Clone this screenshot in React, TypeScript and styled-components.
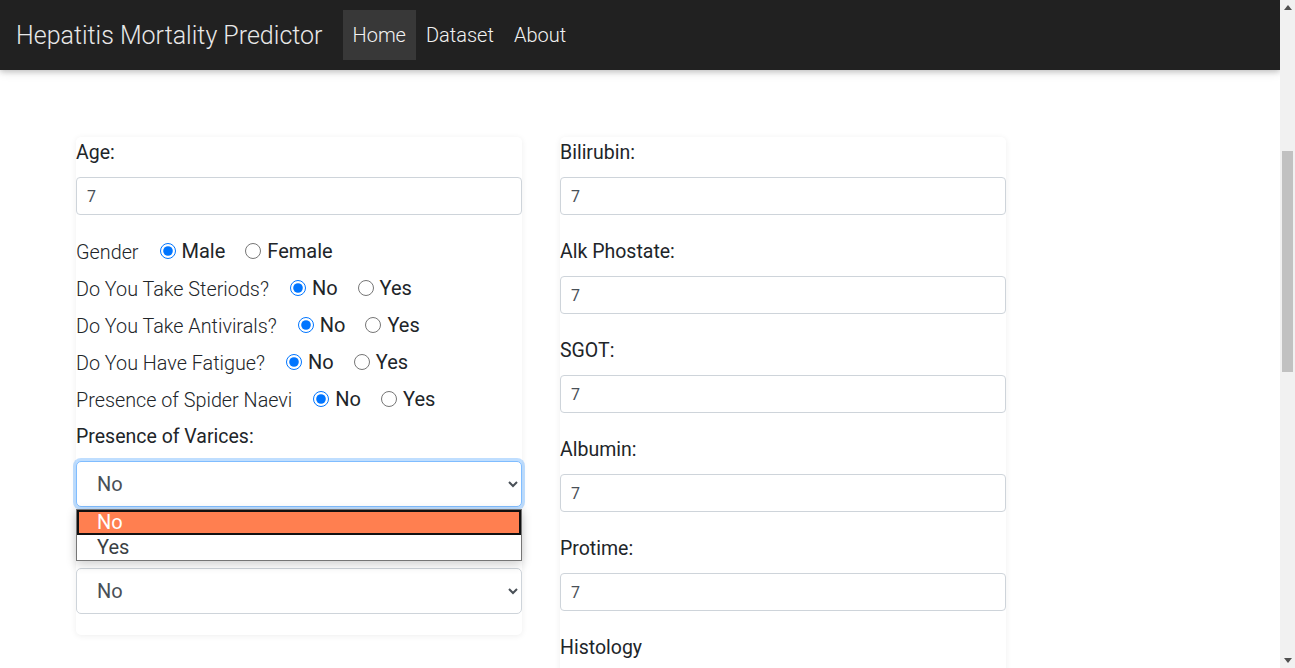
import React from "react";
import styled, { createGlobalStyle } from "styled-components";

const GlobalStyle = createGlobalStyle`
  html, body { margin: 0; padding: 0; height: 100%; overflow: hidden; background: #fff; }
  body { font-family: Roboto, "Noto Sans", "Liberation Sans", sans-serif; color: #212529; }
  * { box-sizing: border-box; }
`;

const Shell = styled.div`
  display: flex;
  width: 100%;
  height: 668px;
`;

const Main = styled.div`
  flex: 1;
  min-width: 0;
  display: flex;
  flex-direction: column;
  overflow: hidden;
`;

const Navbar = styled.nav`
  position: relative;
  z-index: 2;
  flex-shrink: 0;
  height: 70px;
  display: flex;
  align-items: center;
  padding-left: 16px;
  background: #212121;
  box-shadow: 0 2px 5px rgba(0, 0, 0, 0.16), 0 2px 10px rgba(0, 0, 0, 0.12);
`;

const Brand = styled.a`
  font-size: 25px;
  font-weight: 300;
  color: #e8e8e8;
  margin-right: 20px;
  text-decoration: none;
`;

const NavItem = styled.a<{ $active?: boolean }>`
  display: flex;
  align-items: center;
  height: 50px;
  padding: 0 10px;
  font-size: 20px;
  font-weight: 300;
  color: #f2f2f2;
  text-decoration: none;
  background: ${(p) => (p.$active ? "#383838" : "transparent")};
`;

const Content = styled.div`
  flex: 1;
  overflow: hidden;
  display: flex;
  align-items: flex-start;
  gap: 38px;
  padding: 67px 0 0 76px;
`;

const Card = styled.div`
  width: 446px;
  flex-shrink: 0;
  border-radius: 5px;
  background: #fff;
  box-shadow: 0 1px 6px rgba(0, 0, 0, 0.07);
  padding-bottom: 21px;
`;

const Field = styled.div<{ $mt?: number; $mb?: number }>`
  position: relative;
  margin-top: ${(p) => p.$mt ?? 0}px;
  margin-bottom: ${(p) => p.$mb ?? 21}px;
`;

const Label = styled.label<{ $hidden?: boolean }>`
  display: block;
  font-size: 19.5px;
  font-weight: 400;
  line-height: 30px;
  padding-top: 1px;
  height: 30px;
  color: #212529;
  margin-bottom: 10px;
  visibility: ${(p) => (p.$hidden ? "hidden" : "visible")};
`;

const Input = styled.input`
  display: block;
  width: 100%;
  height: 38px;
  padding: 0 10px;
  font-family: inherit;
  font-size: 16px;
  color: #495057;
  border: 1px solid #ced4da;
  border-radius: 4px;
  background: #fff;
  outline: none;
`;

const Select = styled.select<{ $focus?: boolean }>`
  display: block;
  width: 100%;
  height: 46px;
  padding: 0 4px 0 16px;
  font-family: inherit;
  font-size: 20px;
  color: #495057;
  background: #fff;
  border: 1px solid ${(p) => (p.$focus ? "#80bdff" : "#ced4da")};
  border-radius: 5px;
  box-shadow: ${(p) => (p.$focus ? "0 0 0 3px rgba(0, 123, 255, 0.25)" : "none")};
  outline: none;
`;

const Dropdown = styled.ul`
  position: absolute;
  z-index: 3;
  left: 0;
  right: 0;
  top: calc(100% + 2px);
  margin: 0;
  padding: 0;
  list-style: none;
  background: #fff;
  border: 1px solid #767676;
  box-shadow: 0 3px 10px rgba(0, 0, 0, 0.2);
`;

const Option = styled.li<{ $active?: boolean }>`
  height: 25px;
  line-height: ${(p) => (p.$active ? "21px" : "25px")};
  padding-left: ${(p) => (p.$active ? "18px" : "20px")};
  font-size: 20px;
  color: ${(p) => (p.$active ? "#fff" : "#3a3f44")};
  background: ${(p) => (p.$active ? "#ff7f50" : "#fff")};
  border: ${(p) => (p.$active ? "2px solid #111" : "none")};
`;

const RadioRow = styled.div<{ $first?: boolean }>`
  display: flex;
  align-items: center;
  height: 37px;
  margin-top: ${(p) => (p.$first ? "17px" : "0")};
  font-size: 20px;
`;

const Question = styled.span`
  font-weight: 300;
  font-size: 19.8px;
  color: #212529;
  margin-right: 21px;
  padding-top: 3px;
`;

const Choice = styled.label`
  display: flex;
  align-items: center;
  font-weight: 400;
  color: #212529;
  margin-right: 20px;
  gap: 6px;
`;

const Radio = styled.input`
  width: 16px;
  height: 16px;
  margin: 0;
  accent-color: #0075ff;
`;

const Scrollbar = styled.div`
  width: 15px;
  flex-shrink: 0;
  background: #f1f1f1;
  display: flex;
  flex-direction: column;
  align-items: center;
`;

const Arrow = styled.div`
  height: 15px;
  width: 15px;
  display: flex;
  align-items: center;
  justify-content: center;
`;

const Track = styled.div`
  flex: 1;
  width: 100%;
  padding: 136px 2px 0;
`;

const Thumb = styled.div`
  height: 221px;
  background: #c1c1c1;
`;

type RadioQ = { q: string; name: string; a: string; b: string };

const radios: RadioQ[] = [
  { q: "Gender", name: "sex", a: "Male", b: "Female" },
  { q: "Do You Take Steriods?", name: "steroid", a: "No", b: "Yes" },
  { q: "Do You Take Antivirals?", name: "antivirals", a: "No", b: "Yes" },
  { q: "Do You Have Fatigue?", name: "fatigue", a: "No", b: "Yes" },
  { q: "Presence of Spider Naevi", name: "spiders", a: "No", b: "Yes" },
];

const rightFields = ["Bilirubin:", "Alk Phostate:", "SGOT:", "Albumin:", "Protime:"];

export default function App() {
  return (
    <>
      <GlobalStyle />
      <Shell>
        <Main>
          <Navbar>
            <Brand>Hepatitis Mortality Predictor</Brand>
            <NavItem $active>Home</NavItem>
            <NavItem>Dataset</NavItem>
            <NavItem>About</NavItem>
          </Navbar>
          <Content>
            <Card>
              <Field $mb={0}>
                <Label>Age:</Label>
                <Input defaultValue="7" />
              </Field>
              {radios.map((r, i) => (
                <RadioRow key={r.name} $first={i === 0}>
                  <Question>{r.q}</Question>
                  <Choice>
                    <Radio type="radio" name={r.name} defaultChecked />
                    {r.a}
                  </Choice>
                  <Choice>
                    <Radio type="radio" name={r.name} />
                    {r.b}
                  </Choice>
                </RadioRow>
              ))}
              <Field $mt={4}>
                <Label>Presence of Varices:</Label>
                <Select $focus defaultValue="No">
                  <option>No</option>
                  <option>Yes</option>
                </Select>
                <Dropdown>
                  <Option $active>No</Option>
                  <Option>Yes</Option>
                </Dropdown>
              </Field>
              <Field $mb={0}>
                <Label $hidden>Presence of Ascites:</Label>
                <Select defaultValue="No">
                  <option>No</option>
                  <option>Yes</option>
                </Select>
              </Field>
            </Card>
            <Card>
              {rightFields.map((f) => (
                <Field key={f}>
                  <Label>{f}</Label>
                  <Input defaultValue="7" />
                </Field>
              ))}
              <Field>
                <Label>Histology</Label>
                <Select defaultValue="No">
                  <option>No</option>
                  <option>Yes</option>
                </Select>
              </Field>
            </Card>
          </Content>
        </Main>
        <Scrollbar>
          <Arrow>
            <svg width="8" height="5" viewBox="0 0 8 5"><path d="M0 5 L4 0 L8 5 Z" fill="#505050" /></svg>
          </Arrow>
          <Track>
            <Thumb />
          </Track>
          <Arrow>
            <svg width="8" height="5" viewBox="0 0 8 5"><path d="M0 0 L4 5 L8 0 Z" fill="#505050" /></svg>
          </Arrow>
        </Scrollbar>
      </Shell>
    </>
  );
}
